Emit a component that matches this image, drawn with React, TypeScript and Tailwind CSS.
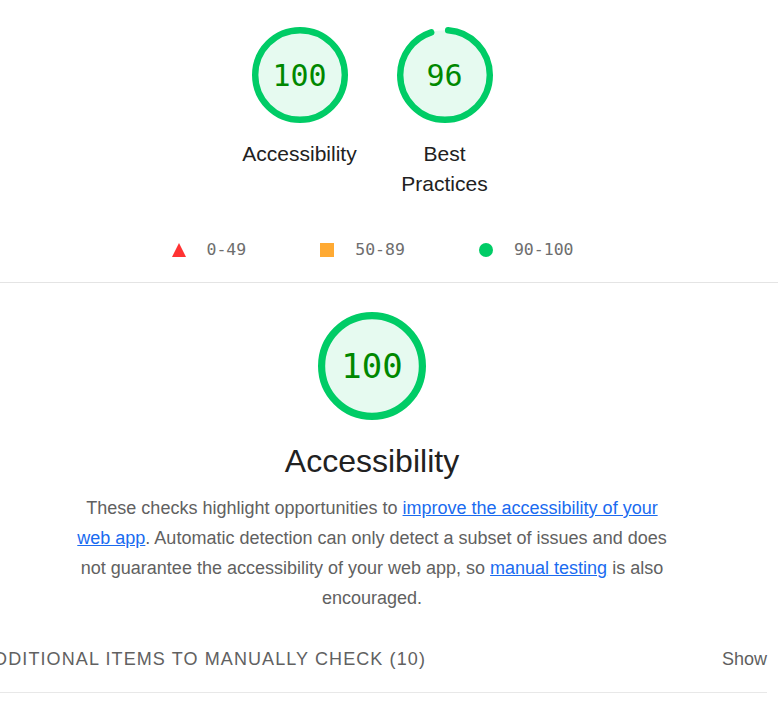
import React from 'react';

const mono = "font-['DejaVu_Sans_Mono',monospace]";

function Gauge({score, size}: {score: number; size: number}) {
  const r = 56;
  const circ = 2 * Math.PI * r;
  const arc = (score / 100) * circ;
  return (
    <div className="relative" style={{width: size, height: size}}>
      <svg viewBox="0 0 120 120" width={size} height={size} className="-rotate-90">
        <circle cx="60" cy="60" r={r} fill="#e6faf0" stroke="none" />
        <circle
          cx="60"
          cy="60"
          r={r}
          fill="none"
          stroke="#00cc66"
          strokeWidth="8"
          strokeLinecap={score < 100 ? 'round' : 'butt'}
          strokeDasharray={score < 100 ? `${arc - 8} ${circ}` : `${circ} 0`}
          strokeDashoffset={score < 100 ? -4 : 0}
        />
      </svg>
      <div
        className={`absolute inset-0 flex items-center justify-center text-[#008800] ${mono} ${
          size > 100 ? 'text-[34px]' : 'text-[30px]'
        }`}
      >
        {score}
      </div>
    </div>
  );
}

function ScoreItem({score, label}: {score: number; label: string}) {
  return (
    <div className="w-[145px] px-[12px] flex flex-col items-center">
      <Gauge score={score} size={96} />
      <div className="mt-[16px] text-[21px] leading-[30px] text-[#212121] text-center">
        {label}
      </div>
    </div>
  );
}

export default function App() {
  return (
    <div className="w-[778px] h-[711px] overflow-hidden bg-white font-['Liberation_Sans',Arial,sans-serif]">
      {/* Score header */}
      <div className="w-[790px] -ml-[23px] pt-[27px] flex flex-col items-center">
        <div className="flex justify-center">
          <ScoreItem score={100} label="Accessibility" />
          <ScoreItem score={96} label="Best Practices" />
        </div>
        <div className={`mt-[39px] ml-[2px] flex items-center gap-[74px] text-[16.5px] leading-[24px] text-[#6e6e6e] ${mono}`}>
          <div className="flex items-center gap-[20px]">
            <svg width="14" height="14" viewBox="0 0 14 14">
              <polygon points="7,0 14,14 0,14" fill="#ff3333" />
            </svg>
            <span>0-49</span>
          </div>
          <div className="flex items-center gap-[21px]">
            <span className="size-[14px] bg-[#ffaa33]" />
            <span>50-89</span>
          </div>
          <div className="flex items-center gap-[21px]">
            <span className="size-[14px] rounded-full bg-[#00cc66]" />
            <span>90-100</span>
          </div>
        </div>
      </div>
      <div className="mt-[20px] border-t border-[#e4e4e4]" />

      {/* Category */}
      <div className="w-[790px] -ml-[23px] flex flex-col items-center">
        <div className="mt-[29px]">
          <Gauge score={100} size={108} />
        </div>
        <h2 className="mt-[21px] text-[32px] leading-[40px] text-[#212121]">Accessibility</h2>
        <p className="mt-[12px] w-[600px] text-center text-[18px] leading-[30px] text-[#616161]">
          These checks highlight opportunities to{' '}
          <a href="#" className="text-[#1a6bf0] underline">
            improve the accessibility of your web app
          </a>
          . Automatic detection can only detect a subset of issues and does not guarantee the
          accessibility of your web app, so{' '}
          <a href="#" className="text-[#1a6bf0] underline">
            manual testing
          </a>{' '}
          is also encouraged.
        </p>
        <div className="mt-[33px] w-full flex items-center justify-between pl-[4px] pb-[20px] border-b border-[#e8e8e8]">
          <span className="text-[18px] leading-[26px] uppercase tracking-[1.1px] text-[#616161]">
            Additional items to manually check (10)
          </span>
          <span className="text-[18px] leading-[26px] text-[#5f5f5f]">Show</span>
        </div>
      </div>
    </div>
  );
}
